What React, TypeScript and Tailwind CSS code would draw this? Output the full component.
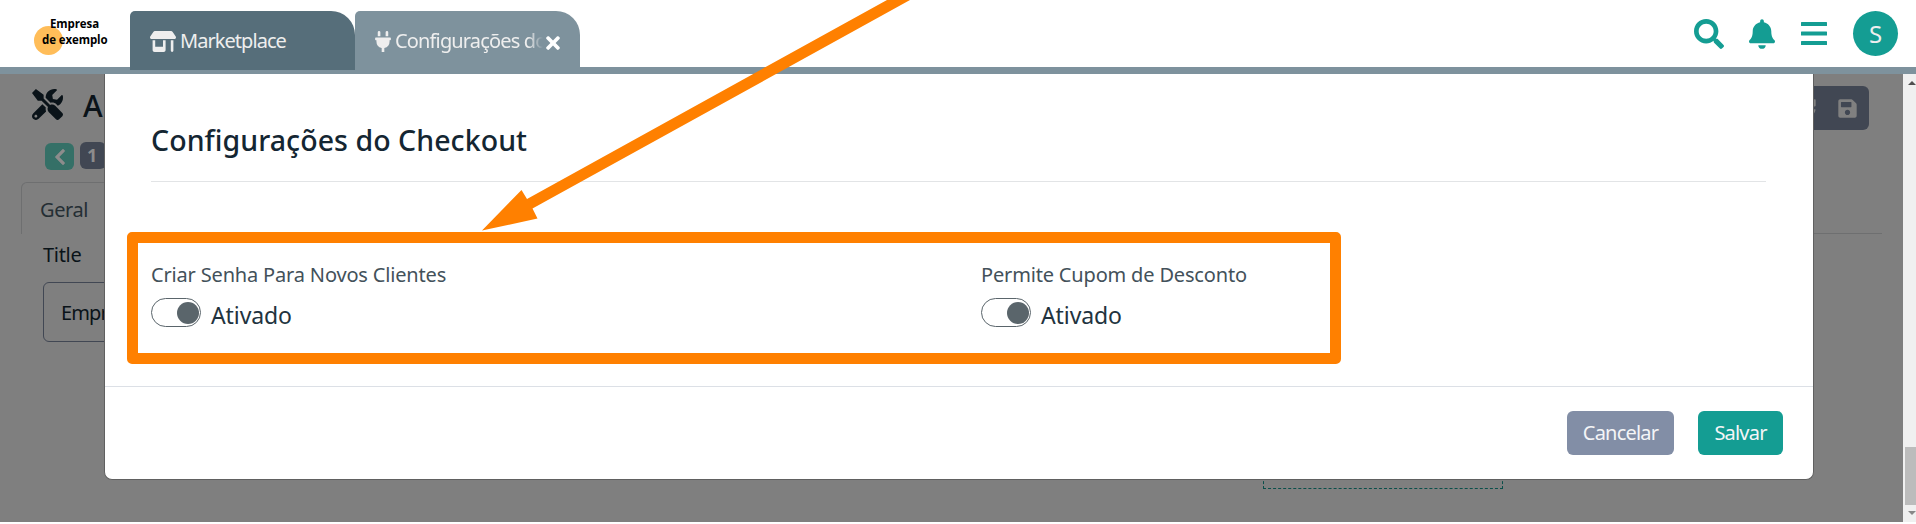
import type { ReactNode } from "react";
import { FaBell, FaChevronLeft, FaPlug, FaSave, FaSearch, FaSyncAlt, FaTimes, FaTools } from "react-icons/fa";
import { FaShop } from "react-icons/fa6";

function Logo() {
  return (
    <div className="relative h-[67px] w-[130px] shrink-0">
      <div className="absolute left-[34px] top-[26px] size-[29px] rounded-full bg-[#ffbd59]" />
      <div className="relative pl-[42px] pt-[16px] font-['Open_Sans',sans-serif] text-[11.5px] font-bold leading-[16px] tracking-[-0.1px] text-black">
        <div className="pl-[8px]">Empresa</div>
        <div className="whitespace-nowrap">de exemplo</div>
      </div>
    </div>
  );
}

function Header() {
  return (
    <header className="flex h-[74px] border-b-[7px] border-[#7e929d] bg-white">
      <Logo />
      <div className="z-10 mt-[11px] flex h-[59px] w-[225px] items-center rounded-tl-[5px] rounded-tr-[24px] bg-[#566e7a] pl-5 text-[#eeeeee]">
        <FaShop className="mt-px h-[21px] w-[26px]" />
        <span className="ml-[4px] text-[20px] tracking-[-0.95px]">Marketplace</span>
      </div>
      <div className="mt-[11px] flex h-[59px] w-[225px] items-center rounded-tl-[5px] rounded-tr-[24px] bg-[#7e929d] pl-5 text-[#eeeeee]">
        <FaPlug className="mt-px h-[21px] w-4 shrink-0" />
        <span className="ml-[4px] w-[148px] shrink-0 overflow-hidden whitespace-nowrap text-[20px] tracking-[-0.85px] [mask-image:linear-gradient(to_right,black_90%,transparent)]">
          Configurações do Checkout
        </span>
        <FaTimes className="mt-[5px] size-[20px] shrink-0 text-white" />
      </div>
      <div className="ml-auto flex h-[67px] items-center pr-[18px] text-[#149d93]">
        <FaSearch className="size-[30px]" />
        <FaBell className="ml-[25px] h-[30px] w-[26px]" />
        <svg className="ml-[26px] h-[23px] w-[26px]" viewBox="0 0 26 23" fill="currentColor">
          <rect width="26" height="4" rx="0.5" />
          <rect y="9.5" width="26" height="4" rx="0.5" />
          <rect y="19" width="26" height="4" rx="0.5" />
        </svg>
        <div className="ml-[26px] flex size-[45px] items-center justify-center rounded-full bg-[#149d93] text-[24px] text-[#eeeeee]">S</div>
      </div>
    </header>
  );
}

function Page() {
  return (
    <div className="relative h-full flex-1 overflow-hidden bg-[#7f7f7f] text-[#0a1319]">
      <div className="flex h-[68px] items-start pl-8 pr-[34px]">
        <FaTools className="mt-[15px] size-[31px]" />
        <span className="ml-5 mt-[12px] text-[30px] font-medium leading-[40px]">A</span>
        <div className="ml-auto mt-[12px] flex h-[44px] w-[120px] items-center justify-end gap-[21px] rounded-md bg-[#414753] pr-[11px] text-[#808080]">
          <FaSyncAlt className="size-5" />
          <FaSave className="size-[21px]" />
        </div>
      </div>
      <div className="flex gap-[6px] pl-[45px]">
        <div className="mt-px flex h-[27px] w-[29px] items-center justify-center rounded-md bg-[#357067] text-[#8c8c8c]">
          <FaChevronLeft className="size-[18px]" stroke="currentColor" strokeWidth="16" />
        </div>
        <div className="flex h-[27px] w-[26px] items-center rounded-md bg-[#414753] pl-[7px] text-[18px] font-bold text-[#8c8c8c]">1</div>
      </div>
      <div className="ml-[21px] mt-[12px] flex h-[52px] w-[1861px]">
        <div className="w-[90px] rounded-t-md border border-b-0 border-[#6e6f70] pl-[18px] pt-[8px] text-[20px] leading-[38px] tracking-[-0.4px] text-[#242e34]">Geral</div>
        <div className="flex-1 border-b border-[#6e6f70]" />
      </div>
      <div className="pl-[43px] pt-[2px]">
        <div className="text-[20px] leading-[38px] tracking-[-0.3px]">Title</div>
        <div className="mt-[8px] h-[60px] w-[600px] rounded-md border border-[#414753] pl-[17px] text-[20px] leading-[60px] tracking-[-0.9px]">Empr</div>
      </div>
      <div className="absolute left-[1263px] top-[339px] h-[76px] w-[240px] border border-dashed border-[#0a4f4a]" />
    </div>
  );
}

function Toggle({ label }: { label: string }) {
  return (
    <div className="w-[830px]">
      <div className="text-[20px] leading-[30px] tracking-[-0.17px] text-[#43515a]">{label}</div>
      <div className="mt-[8px] flex h-[29px] items-center">
        <div className="flex h-[29px] w-[50px] items-center justify-end rounded-full border border-[#5a656b] pr-px">
          <div className="size-[22px] rounded-full bg-[#5a656b]" />
        </div>
        <span className="ml-[10px] mt-[5px] text-[23px] tracking-[-0.1px] text-[#22333e]">Ativado</span>
      </div>
    </div>
  );
}

function Button({ className, children }: { className: string; children: ReactNode }) {
  return <button className={`h-[44px] rounded-md text-[20px] text-[#f4f5f7] ${className}`}>{children}</button>;
}

function Modal() {
  return (
    <div className="absolute left-[104px] top-0 h-[406px] w-[1710px] rounded-b-lg border border-t-0 border-[#606060] bg-white">
      <div className="mx-[46px] h-[108px] w-[1615px] border-b border-[#e2e4e6] pt-[45px] text-[#142632]">
        <h1 className="text-[28.5px] font-medium leading-[42px] tracking-[0.06px]">Configurações do Checkout</h1>
      </div>
      <div className="flex h-[204px] pl-[46px] pt-[78px]">
        <Toggle label="Criar Senha Para Novos Clientes" />
        <Toggle label="Permite Cupom de Desconto" />
      </div>
      <div className="flex h-[93px] items-center justify-end gap-6 border-t border-[#dce0e6] pr-[30px]">
        <Button className="w-[107px] bg-[#828ea6] tracking-[-0.8px]">Cancelar</Button>
        <Button className="w-[85px] bg-[#149d93] tracking-[-0.8px]">Salvar</Button>
      </div>
    </div>
  );
}

function Scrollbar() {
  return (
    <div className="flex h-full w-[13px] flex-col bg-[#f0f0f0] pl-[2px]">
      <svg className="mt-[7px] h-1 w-[11px] shrink-0" viewBox="0 0 11 4"><path d="M3 4L7 0L11 4Z" fill="#505050" /></svg>
      <div className="mt-auto h-[58px] bg-[#bcbcbc]" />
      <svg className="mb-[7px] mt-[6px] h-1 w-[11px] shrink-0" viewBox="0 0 11 4"><path d="M3 0L7 4L11 0Z" fill="#888888" /></svg>
    </div>
  );
}

export default function App() {
  return (
    <div className="relative h-[524px] w-[1916px] overflow-hidden bg-white font-['Noto_Sans',sans-serif]">
      <Header />
      <main className="relative flex h-[448px]">
        <Page />
        <Scrollbar />
        <Modal />
      </main>
      <div className="absolute left-[127px] top-[232px] h-[132px] w-[1214px] rounded-[5px] border-[11px] border-[#ff8000]" />
      <svg className="absolute left-0 top-0 z-20 h-[240px] w-[920px]" viewBox="0 0 920 240">
        <path d="M482 230.5L521.5 190L527 199L887 0H910L532.5 208.5L537.5 218.5Z" fill="#ff8000" />
      </svg>
    </div>
  );
}
